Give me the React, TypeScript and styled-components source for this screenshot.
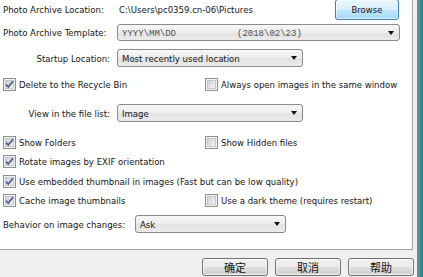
import React from 'react';
import styled, { createGlobalStyle } from 'styled-components';

const GlobalStyle = createGlobalStyle`
    html, body {
        margin: 0;
        padding: 0;
        background: #f0f0f0;
    }
    body {
        font-family: "DejaVu Sans Condensed", "Liberation Sans", sans-serif;
        font-stretch: condensed;
        font-size: 9.5px;
        color: #151515;
    }
`;

const Window = styled.div`
    display: flex;
    width: 423px;
    height: 277px;
    overflow: hidden;
`;

const Body = styled.div`
    width: 417px;
    flex: none;
    display: flex;
    flex-direction: column;
`;

const Frame = styled.div`
    flex: 1;
    border-left: 1px solid #6f8a90;
    background: linear-gradient(to right, #4d9aa8, #2f7b89);
`;

const Panel = styled.div`
    width: 412px;
    height: 249px;
    flex: none;
    background: #fff;
    border-right: 1px solid #a3a3a3;
    border-bottom: 1px solid #a3a3a3;
    display: flex;
    flex-direction: column;
    overflow: hidden;
`;

const Row = styled.div<{ $top: number; $h: number }>`
    display: flex;
    align-items: center;
    flex: none;
    margin-top: ${(p) => p.$top}px;
    height: ${(p) => p.$h}px;
    padding-left: 3px;
    white-space: nowrap;
`;

const Label = styled.span<{ $w: number; $right?: boolean }>`
    flex: none;
    width: ${(p) => p.$w}px;
    text-align: ${(p) => (p.$right ? 'right' : 'left')};
    margin-right: 7px;
`;

const PathText = styled.span`
    margin-left: 2px;
`;

const Combo = styled.div<{ $w: number }>`
    box-sizing: border-box;
    width: ${(p) => p.$w}px;
    height: 100%;
    display: flex;
    align-items: center;
    padding: 0 5px 0 4px;
    border: 1px solid #8b8b8b;
    border-radius: 3px;
    background: linear-gradient(#f7f7f7, #ededed 50%, #e2e2e2 51%, #ebebeb);
`;

const ComboText = styled.span`
    flex: 1;
    overflow: hidden;
`;

const MonoText = styled.span<{ $gap?: number }>`
    font-family: "Liberation Mono", "DejaVu Sans Mono", monospace;
    font-stretch: normal;
    font-size: 9px;
    color: #4e4e4e;
    margin-left: ${(p) => p.$gap ?? 0}px;
`;

const Arrow = styled.span`
    flex: none;
    width: 0;
    height: 0;
    border-left: 3.5px solid transparent;
    border-right: 3.5px solid transparent;
    border-top: 4px solid #111;
`;

const BrowseButton = styled.button`
    box-sizing: border-box;
    margin-left: auto;
    margin-right: 13px;
    width: 64px;
    height: 100%;
    font: inherit;
    color: #151515;
    border: 1px solid #3c7fb1;
    border-radius: 3px;
    background: linear-gradient(#eaf6fd, #d9f0fc 50%, #bee6fd 51%, #a7d9f5);
    box-shadow: inset 0 0 0 1px rgba(255, 255, 255, 0.6);
    padding: 0;
`;

const CheckCell = styled.label<{ $w?: number }>`
    display: flex;
    align-items: center;
    gap: 3px;
    flex: none;
    width: ${(p) => (p.$w ? `${p.$w}px` : 'auto')};
`;

const Footer = styled.div`
    flex: 1;
    display: flex;
    justify-content: flex-end;
    align-items: flex-start;
    gap: 7px;
    padding: 8px 3px 0 0;
`;

const DialogButton = styled.button`
    box-sizing: border-box;
    width: 66px;
    height: 18px;
    padding: 0;
    font-family: "Noto Sans CJK SC", sans-serif;
    font-size: 11px;
    line-height: 1;
    color: #151515;
    border: 1px solid #707070;
    border-radius: 3px;
    background: linear-gradient(#f2f2f2, #ebebeb 50%, #dddddd 51%, #cfcfcf);
    box-shadow: inset 0 0 0 1px rgba(255, 255, 255, 0.7);
`;

const CheckBox: React.FC<{ checked?: boolean }> = ({ checked }) => (
    <svg width="13" height="13" viewBox="0 0 13 13">
        <defs>
            <linearGradient id="cbg" x1="0" y1="0" x2="1" y2="1">
                <stop offset="0" stopColor="#cbcfd5" />
                <stop offset="1" stopColor="#f6f6f6" />
            </linearGradient>
        </defs>
        <rect x="0.5" y="0.5" width="12" height="12" fill="#f4f4f4" stroke="#8e8f8f" />
        <rect x="2.5" y="2.5" width="8" height="8" fill="url(#cbg)" stroke="#b7bcc4" strokeWidth="0.8" />
        {checked && (
            <path d="M3 6.6 L5.3 9 L10 3.3" fill="none" stroke="#4a5c8f" strokeWidth="1.7" />
        )}
    </svg>
);

const Check: React.FC<{ checked?: boolean; w?: number; children: React.ReactNode }> = ({
    checked,
    w,
    children,
}) => (
    <CheckCell $w={w}>
        <CheckBox checked={checked} />
        <span>{children}</span>
    </CheckCell>
);

const App: React.FC = () => {
    return (
        <>
            <GlobalStyle />
            <Window>
                <Body>
                    <Panel>
                        <Row $top={-1} $h={21}>
                            <Label $w={107}>Photo Archive Location:</Label>
                            <PathText>C:\Users\pc0359.cn-06\Pictures</PathText>
                            <BrowseButton>Browse</BrowseButton>
                        </Row>
                        <Row $top={4} $h={17}>
                            <Label $w={107}>Photo Archive Template:</Label>
                            <Combo $w={283}>
                                <ComboText>
                                    <MonoText>YYYY\MM\DD</MonoText>
                                    <MonoText $gap={61}>(2018\02\23)</MonoText>
                                </ComboText>
                                <Arrow />
                            </Combo>
                        </Row>
                        <Row $top={8} $h={18}>
                            <Label $w={107} $right>
                                Startup Location:
                            </Label>
                            <Combo $w={186}>
                                <ComboText>Most recently used location</ComboText>
                                <Arrow />
                            </Combo>
                        </Row>
                        <Row $top={10} $h={14}>
                            <Check checked w={202}>
                                Delete to the Recycle Bin
                            </Check>
                            <Check>Always open images in the same window</Check>
                        </Row>
                        <Row $top={13} $h={18}>
                            <Label $w={107} $right>
                                View in the file list:
                            </Label>
                            <Combo $w={186}>
                                <ComboText>Image</ComboText>
                                <Arrow />
                            </Combo>
                        </Row>
                        <Row $top={13} $h={14}>
                            <Check checked w={202}>
                                Show Folders
                            </Check>
                            <Check>Show Hidden files</Check>
                        </Row>
                        <Row $top={5} $h={14}>
                            <Check checked>Rotate images by EXIF orientation</Check>
                        </Row>
                        <Row $top={6} $h={14}>
                            <Check checked>
                                Use embedded thumbnail in images (Fast but can be low quality)
                            </Check>
                        </Row>
                        <Row $top={5} $h={14}>
                            <Check checked w={202}>
                                Cache image thumbnails
                            </Check>
                            <Check>Use a dark theme (requires restart)</Check>
                        </Row>
                        <Row $top={8} $h={18}>
                            <Label $w={125}>Behavior on image changes:</Label>
                            <Combo $w={151}>
                                <ComboText>Ask</ComboText>
                                <Arrow />
                            </Combo>
                        </Row>
                    </Panel>
                    <Footer>
                        <DialogButton>确定</DialogButton>
                        <DialogButton>取消</DialogButton>
                        <DialogButton>帮助</DialogButton>
                    </Footer>
                </Body>
                <Frame />
            </Window>
        </>
    );
};

export default App;
